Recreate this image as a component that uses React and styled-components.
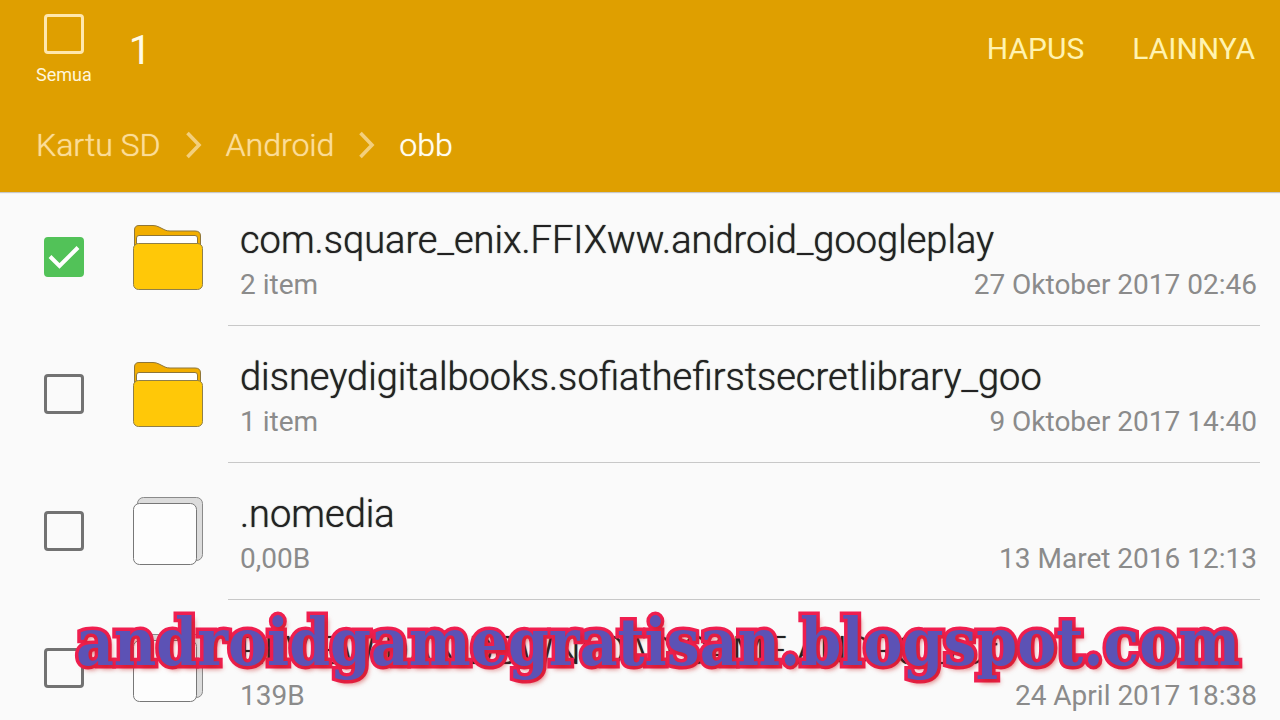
import React, { useState } from 'react'
import styled, { createGlobalStyle } from "styled-components"

const files = [
  {id: "ffix", name: "com.square_enix.FFIXww.android_googleplay", info: "2 item", date: "27 Oktober 2017 02:46", folder: true},
  {id: "sofia", name: "disneydigitalbooks.sofiathefirstsecretlibrary_goo", info: "1 item", date: "9 Oktober 2017 14:40", folder: true},
  {id: "nomedia", name: ".nomedia", info: "0,00B", date: "13 Maret 2016 12:13"},
  {id: "review", name: "REVIEW DAN DOWNLOAD GAME ANDROID.url", info: "139B", date: "24 April 2017 18:38"},
]

const FolderIcon = () => (
  <Icon viewBox="0 0 72 72" aria-hidden="true">
    <path d="M2.5 24V8Q2.5 3.500 7 3.500H21Q24 3.500 27 5L33 8Q35 9 38 9H63Q68.500 9 68.500 14V24Z" fill="#f2ae00" stroke="#8f7638"/>
    <path d="M4.500 24V16Q4.500 13.500 7 13.500H63Q65.500 13.500 65.500 16V24Z" fill="#fff" stroke="#8f7638"/>
    <rect x="1.500" y="21.500" width="69" height="46" rx="5" fill="#ffc808" stroke="#8f7f4a"/>
  </Icon>
)

const FileIcon = () => (
  <Icon viewBox="0 0 72 72" aria-hidden="true">
    <rect x="5.500" y="1.500" width="65" height="63" rx="6" fill="#dcdcdc" stroke="#8a8a8a"/>
    <rect x="1.500" y="7.500" width="63" height="61" rx="6" fill="#fdfdfd" stroke="#777"/>
  </Icon>
)

const Chevron = () => (
  <Arrow viewBox="0 0 16 28" aria-hidden="true">
    <path d="M1.500 2L13 14L1.500 26" fill="none" stroke="#f3cf7c" strokeWidth="3.600"/>
  </Arrow>
)

const HomePage = () => {
  const [selected, setSelected] = useState(["ffix"])

  const toggle = (id) => {
    setSelected(selected.includes(id) ? selected.filter((el)=> el !== id) : [...selected, id])
  }
  const toggleAll = () => {
    setSelected(selected.length === files.length ? [] : files.map((el)=> el.id))
  }

  return (
    <Container>
      <GlobalStyle/>
      <Header>
        <Toolbar>
          <All>
            <Check type="checkbox" $light checked={selected.length === files.length} onChange={toggleAll}/>
            <span>Semua</span>
          </All>
          <Count>{selected.length}</Count>
          <Actions>
            <Action>HAPUS</Action>
            <Action>LAINNYA</Action>
          </Actions>
        </Toolbar>
        <Path>
          <Crumb href="#sd">Kartu SD</Crumb>
          <Chevron/>
          <Crumb href="#android">Android</Crumb>
          <Chevron/>
          <Crumb href="#obb" $current>obb</Crumb>
        </Path>
      </Header>
      <List>
        {
          files.map((props)=>(
            <Row key={props.id}>
              <Check type="checkbox" id={props.id} checked={selected.includes(props.id)} onChange={()=> toggle(props.id)}/>
              {props.folder ? <FolderIcon/> : <FileIcon/>}
              <Details>
                <Name htmlFor={props.id}>{props.name}</Name>
                <Meta>
                  <span>{props.info}</span>
                  <span>{props.date}</span>
                </Meta>
              </Details>
            </Row>
          ))
        }
      </List>
      <Watermark>androidgamegratisan.blogspot.com</Watermark>
    </Container>
  )
}

export default HomePage

const GlobalStyle = createGlobalStyle`
  *{
    box-sizing: border-box;
  }
  body{
    margin: 0;
    background-color: #fafafa;
    font-family: Roboto, sans-serif;
  }
`
const Container = styled.div`
  position: relative;
  height: 100vh;
  overflow: hidden;
`
const Header = styled.header`
  background-color: #df9f00;
  padding: 14px 25px 0 36px;
  height: 192px;
  box-shadow: 0 1px 1px rgba(0,0,0,0.2);
`
const Toolbar = styled.div`
  display: flex;
  align-items: flex-start;
  height: 100px;
`
const All = styled.label`
  display: flex;
  flex-direction: column;
  align-items: center;
  gap: 10px;
  color: #fff6dc;
  font-size: 18px;
  line-height: 22px;
`
const Check = styled.input`
  appearance: none;
  flex-shrink: 0;
  width: 40px;
  height: 40px;
  margin: 0;
  border: 3px solid ${({$light})=> $light ? "#ffe7ad" : "#727272"};
  border-radius: 4px;
  cursor: pointer;

  &:checked{
    border-color: #52c258;
    background: #52c258 url("data:image/svg+xml,%3Csvg xmlns='http://www.w3.org/2000/svg' viewBox='0 0 34 34'%3E%3Cpath d='M3 16.500L12.500 26L31 7.500' fill='none' stroke='white' stroke-width='4'/%3E%3C/svg%3E") center / 34px 34px no-repeat;
  }
`
const Count = styled.div`
  margin-left: 37px;
  padding-top: 12px;
  color: #fffbe8;
  font-size: 40px;
  line-height: 50px;
`
const Actions = styled.div`
  display: flex;
  gap: 48px;
  margin-left: auto;
  padding-top: 16px;
`
const Action = styled.button`
  border: none;
  padding: 0;
  background: none;
  color: #fff3b0;
  font-family: inherit;
  font-size: 30px;
  line-height: 38px;
  cursor: pointer;
`
const Path = styled.nav`
  display: flex;
  align-items: center;
  height: 62px;
`
const Crumb = styled.a`
  color: ${({$current})=> $current ? "#fffdf0" : "#fbdd98"};
  font-size: 32px;
  font-weight: 300;
  line-height: 40px;
  text-decoration: none;
  text-shadow: 0 0 1px currentColor;
`
const Arrow = styled.svg`
  width: 16px;
  height: 28px;
  margin: 0 24px 0 25px;
`
const List = styled.main`
  display: grid;
  gap: 3px;
`
const Row = styled.div`
  display: flex;
  align-items: flex-start;
  padding: 0 20px 0 44px;

  input{
    margin-top: 45px;
  }
  svg{
    margin: 30px 24px 0 48px;
  }
`
const Icon = styled.svg`
  flex-shrink: 0;
  width: 72px;
  height: 72px;
`
const Details = styled.div`
  flex: 1;
  min-width: 0;
  height: 134px;
  padding: 24px 3px 0 12px;
  border-bottom: 1px solid #c8c8c8;
`
const Name = styled.label`
  display: block;
  color: #222;
  font-size: 38px;
  font-weight: 300;
  line-height: 48px;
  white-space: nowrap;
  text-shadow: 0 0 1px #222;
`
const Meta = styled.div`
  display: flex;
  justify-content: space-between;
  color: #8b8b8b;
  font-size: 28px;
  line-height: 42px;
`
const Watermark = styled.div`
  position: absolute;
  right: 0;
  bottom: 42px;
  left: 36px;
  color: #5c52b5;
  font-family: "DejaVu Serif Condensed", "DejaVu Serif", serif;
  font-size: 65px;
  font-weight: bold;
  line-height: 72px;
  text-align: center;
  white-space: nowrap;
  pointer-events: none;
  -webkit-text-stroke: 7px #f01f50;
  paint-order: stroke fill;
  text-shadow: 3px 4px 5px rgba(200,30,30,0.6);
`
